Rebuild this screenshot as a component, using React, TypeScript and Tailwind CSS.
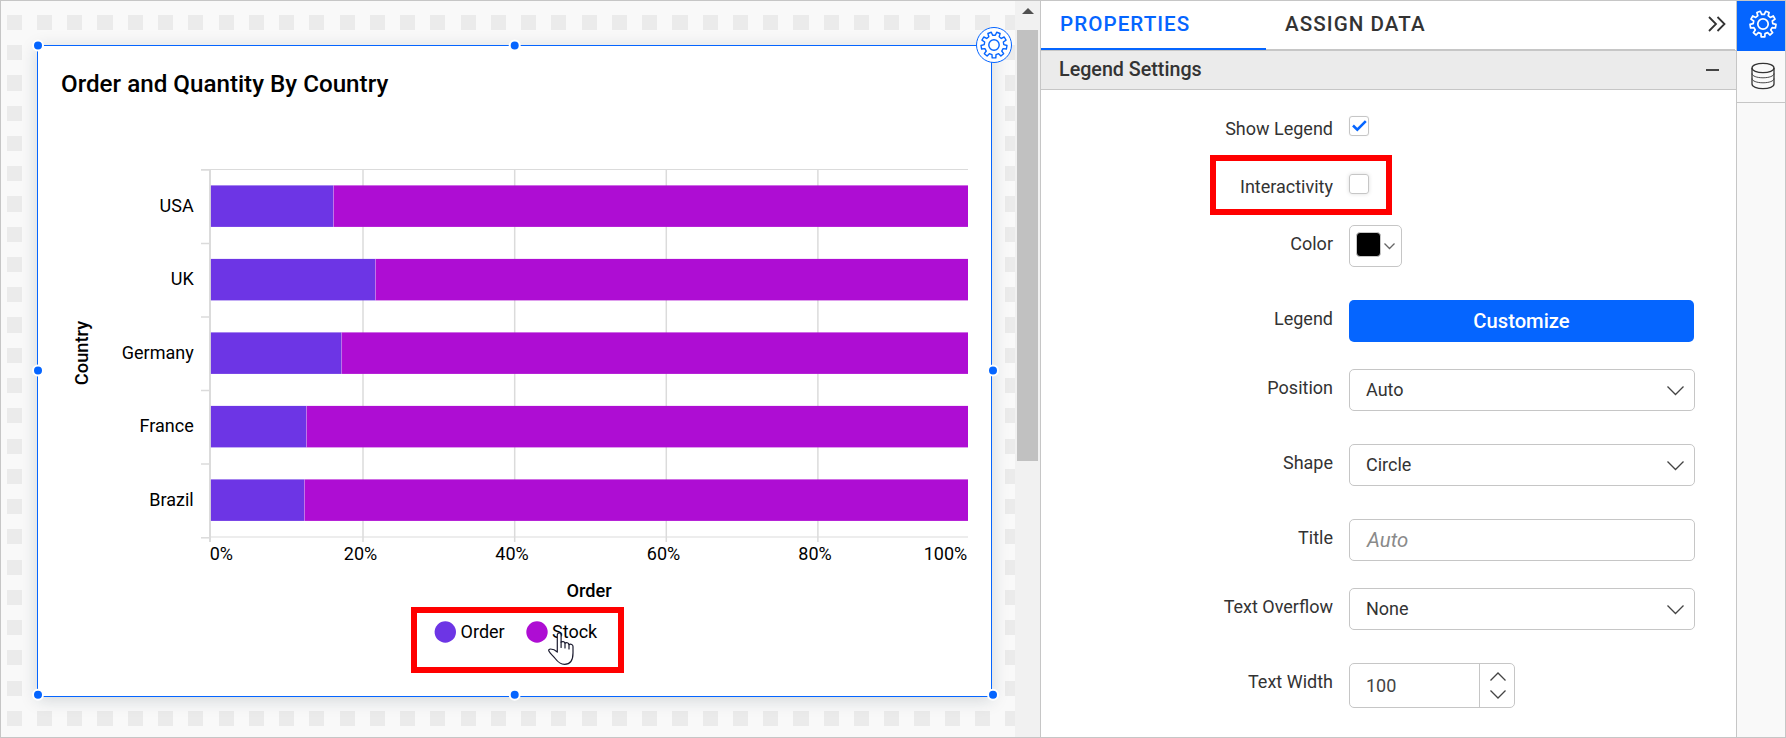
import React from "react";

const ORDER = "#6d35e5";
const STOCK = "#ae0dd3";

const PITCH = 30.26;
const tiles = (() => {
  const list: { x: number; y: number; w: number; h: number }[] = [];
  for (let r = 0; r < 24; r++) {
    for (let c = 0; c < 34; c++) {
      const fx = 7.18 + c * PITCH;
      const fy = 15.38 + r * PITCH;
      const x = Math.floor(fx);
      const y = Math.floor(fy);
      list.push({ x, y, w: Math.floor(fx + 15.13) - x, h: Math.floor(fy + 15.13) - y });
    }
  }
  return list;
})();

const bars = [
  { label: "USA", top: 185.4, split: 333.5 },
  { label: "UK", top: 258.9, split: 375.5 },
  { label: "Germany", top: 332.4, split: 341.6 },
  { label: "France", top: 405.9, split: 306.5 },
  { label: "Brazil", top: 479.4, split: 304.5 },
];

const xTicks = [
  { label: "0%", x: 210, center: 221.3 },
  { label: "20%", x: 363, center: 360.5 },
  { label: "40%", x: 514.7, center: 512 },
  { label: "60%", x: 666.3, center: 663.5 },
  { label: "80%", x: 817.9, center: 815 },
  { label: "100%", x: 0, center: 945.5 },
];

const handles = [
  { x: 38, y: 45.5 },
  { x: 514.7, y: 45.5 },
  { x: 38, y: 370.5 },
  { x: 993, y: 370.5 },
  { x: 38, y: 694.7 },
  { x: 514.7, y: 694.7 },
  { x: 993, y: 694.7 },
];

function gearPath(cx: number, cy: number, outer: number, inner: number) {
  const pts: string[] = [];
  const at = (r: number, deg: number) => {
    const a = ((deg - 90) * Math.PI) / 180;
    return `${(cx + r * Math.cos(a)).toFixed(2)} ${(cy + r * Math.sin(a)).toFixed(2)}`;
  };
  for (let i = 0; i < 9; i++) {
    const d = 20 + i * 40;
    pts.push(at(inner, d - 12), at(outer, d - 8), at(outer, d + 8), at(inner, d + 12));
  }
  return `M${pts.join("L")}Z`;
}

function Gear({ size, stroke }: { size: number; stroke: number }) {
  return (
    <svg width={size} height={size} viewBox="0 0 28 28" fill="none" stroke="currentColor" strokeWidth={stroke} strokeLinejoin="round">
      <path d={gearPath(14, 14, 13, 9.8)} />
      <circle cx="14" cy="14" r="5.2" />
    </svg>
  );
}

function Chevron({ w, up = false, color = "#444" }: { w: number; up?: boolean; color?: string }) {
  return (
    <svg width={w} height={w / 2 + 1} viewBox={`0 0 ${w} ${w / 2 + 1}`} fill="none" stroke={color} strokeWidth="1.3" className={up ? "rotate-180" : ""}>
      <path d={`M0.5 0.5L${w / 2} ${w / 2}L${w - 0.5} 0.5`} />
    </svg>
  );
}

function Chart() {
  return (
    <svg width="953" height="576" viewBox="38 120 953 576" className="block" fontFamily="Roboto, sans-serif" fontSize="18">
      <g stroke="#dbdbdb">
        <line x1="201" x2="968" y1="169.5" y2="169.5" />
        <line x1="210" x2="968" y1="537" y2="537" stroke="#ededed" strokeWidth="2" />
        {[170, 243.5, 317, 390.5, 464, 537.8].map((y) => (
          <line key={y} x1="201" x2="209" y1={y} y2={y} strokeWidth="1.5" />
        ))}
        {xTicks.slice(1, 5).map((t) => (
          <line key={t.label} x1={t.x} x2={t.x} y1="170" y2="542" strokeWidth="1.5" />
        ))}
        <line x1="210" x2="210" y1="169" y2="542" strokeWidth="2" />
      </g>
      {bars.map((b) => (
        <g key={b.label}>
          <rect x="210.9" y={b.top} width={b.split - 210.9} height="41.5" fill={ORDER} />
          <rect x={b.split} y={b.top} width={968 - b.split} height="41.5" fill={STOCK} />
          <line x1={b.split} x2={b.split} y1={b.top} y2={b.top + 41.5} stroke="#fff" strokeOpacity="0.2" />
          <text x="193.7" y={b.top + 26.5} textAnchor="end">
            {b.label}
          </text>
        </g>
      ))}
      {xTicks.map((t) => (
        <text key={t.label} x={t.center} y="560" textAnchor="middle">
          {t.label}
        </text>
      ))}
      <text transform="translate(88 353) rotate(-90)" textAnchor="middle" fontWeight="500" fontSize="18.3">
        Country
      </text>
      <text x="589" y="597" textAnchor="middle" fontWeight="500" fontSize="18.2">
        Order
      </text>
      <circle cx="445.3" cy="632" r="10.7" fill={ORDER} />
      <text x="460.6" y="638">
        Order
      </text>
      <circle cx="537" cy="632" r="10.7" fill={STOCK} />
      <text x="552" y="638">
        Stock
      </text>
    </svg>
  );
}

function Hand() {
  return (
    <svg width="26" height="35" viewBox="0 0 26 35" fill="#fff" stroke="#1a1a2e" strokeWidth="1.2" strokeLinejoin="round" strokeLinecap="round">
      <path d="M9.3 20.5V4.2C9.3 2.8 10.2 2 11.2 2S13.1 2.8 13.1 4.2V11.2C14 10.2 16.6 10.2 17 12.2C18.2 11.2 20.6 11.6 21 13.6C22.8 12.7 25 13.4 25 15.6V22C25 29.5 21.5 33.3 16.6 33.3C12 33.3 9.8 31 7.2 27.5C5 24.6 2.6 23.2 1 20.3C0.2 18.8 1.2 18 2.6 18C5 18 7.2 19 9.3 21Z" />
      <path d="M13.1 11V16.5M17 12.2V17M21 13.6V18" fill="none" />
    </svg>
  );
}

function Canvas() {
  return (
    <div className="relative w-[1015px] shrink-0 overflow-hidden bg-[#f9f9f9]">
      <svg width="1015" height="738" viewBox="1 1 1015 738" className="absolute left-0 top-0" shapeRendering="crispEdges">
        {tiles.map((t) => (
          <rect key={`${t.x}-${t.y}`} x={t.x} y={t.y} width={t.w} height={t.h} fill="#ebebeb" />
        ))}
      </svg>
      <section className="absolute left-[36px] top-[44px] h-[652px] w-[955px] border border-[#0565ff] bg-white shadow-[0_3px_16px_rgba(20,40,60,0.17)]">
        <h1 className="h-[74px] pl-[23px] pt-[22px] text-[24.2px] leading-8 font-medium whitespace-nowrap text-black">Order and Quantity By Country</h1>
        <Chart />
      </section>
      <svg width="1015" height="738" viewBox="1 1 1015 738" className="absolute left-0 top-0">
        {handles.map((h) => (
          <circle key={`${h.x}-${h.y}`} cx={h.x} cy={h.y} r="5" fill="#0565ff" stroke="#fff" strokeWidth="2" />
        ))}
      </svg>
      <div className="absolute left-[975px] top-[26px] flex size-[36px] items-center justify-center rounded-full border border-[#0565ff] bg-white text-[#0565ff]">
        <Gear size={28} stroke={1.4} />
      </div>
      <div className="absolute left-[410px] top-[606px] h-[66px] w-[213px] border-[6px] border-[#ff0000]" />
      <div className="absolute left-[547px] top-[630px]">
        <Hand />
      </div>
    </div>
  );
}

function Scrollbar() {
  return (
    <div className="flex w-[25px] shrink-0 flex-col bg-[#f1f1f1] pl-[2px]">
      <div className="flex h-[29px] w-[21px] justify-center pt-[7px]">
        <svg width="12" height="6" viewBox="0 0 12 6">
          <path d="M6 0L12 6H0Z" fill="#505050" />
        </svg>
      </div>
      <div className="h-[431px] w-[21px] bg-[#c1c1c1]" />
    </div>
  );
}

function Row({ label, gap, tight = false, children }: { label: string; gap: string; tight?: boolean; children: React.ReactNode }) {
  return (
    <div className={`flex items-start ${gap}`}>
      <span className={`w-[292px] shrink-0 text-right text-[18px] leading-6 whitespace-nowrap text-[#333] ${tight ? "-mb-[5px] pt-px" : "pt-[7px]"}`}>{label}</span>
      <div className="ml-[16px] flex">{children}</div>
    </div>
  );
}

const field = "flex h-[42px] w-[346px] items-center rounded-[5px] border border-[#c6c6c6] bg-white pl-[16px] pr-[10px] text-[18px] leading-6 text-[#333]";

function SelectBox({ value }: { value: string }) {
  return (
    <div className={`${field} justify-between`}>
      <span>{value}</span>
      <span className="pt-[2px]">
        <Chevron w={17} />
      </span>
    </div>
  );
}

function Panel() {
  return (
    <div className="flex w-[695px] shrink-0 flex-col bg-white">
      <div className="flex h-[49px] shrink-0">
        <div className="h-[49px] w-[225px] border-b-2 border-[#0565ff] pl-[19px] pt-[9px] text-[20.6px] leading-7 font-medium tracking-[1.05px] text-[#0565ff]">PROPERTIES</div>
        <div className="flex h-[49px] w-[469px] items-start justify-between border-b border-[#c6c6c6] pl-[19px] pr-[9px] pt-[9px]">
          <span className="text-[20.6px] leading-7 font-medium tracking-[1.05px] text-[#333]">ASSIGN DATA</span>
          <svg width="18" height="16" viewBox="0 0 18 16" fill="none" stroke="#333" strokeWidth="1.8" className="mt-[6px]">
            <path d="M1 1L8 8L1 15M9.5 1L16.5 8L9.5 15" />
          </svg>
        </div>
      </div>
      <div className="flex h-[40px] shrink-0 items-center justify-between border-y border-[#c6c6c6] bg-[#ebebeb] pl-[18px] pr-[17px]">
        <h2 className="pb-px text-[19.7px] leading-6 font-medium text-[#333]">Legend Settings</h2>
        <div className="mb-px h-[2px] w-[13px] bg-[#444]" />
      </div>
      <div className="flex flex-col">
        <Row label="Show Legend" gap="mt-[26px]" tight>
          <div className="flex size-[20px] items-center justify-center rounded-[3px] border border-[#c6c6c6] shadow-[0_0_1px_#ddd]">
            <svg width="15" height="12" viewBox="0 0 15 12" fill="none" stroke="#0565ff" strokeWidth="2.6" className="ml-px">
              <path d="M1 5.5L5.3 9.6L13.8 1.2" />
            </svg>
          </div>
        </Row>
        <Row label="Interactivity" gap="mt-[38px]" tight>
          <div className="size-[20px] rounded-[3px] border border-[#c6c6c6] shadow-[0_0_4px_#ddd]" />
        </Row>
        <Row label="Color" gap="mt-[31px]">
          <div className="flex h-[42px] w-[53px] items-center rounded-[5px] border border-[#c6c6c6] pb-[3px] pl-[6px]">
            <div className="size-[25px] rounded-[4px] border border-[#c6c6c6] bg-black" />
            <span className="ml-[3px] pt-[4px]">
              <Chevron w={11} color="#666" />
            </span>
          </div>
        </Row>
        <Row label="Legend" gap="mt-[33px]">
          <button className="h-[42px] w-[345px] rounded-[5px] bg-[#0565ff] text-[20.2px] font-medium text-white">Customize</button>
        </Row>
        <Row label="Position" gap="mt-[27px]">
          <SelectBox value="Auto" />
        </Row>
        <Row label="Shape" gap="mt-[33px]">
          <SelectBox value="Circle" />
        </Row>
        <Row label="Title" gap="mt-[33px]">
          <div className={field}>
            <span className="pl-px text-[20.4px] text-[#8a8a8a] italic">Auto</span>
          </div>
        </Row>
        <Row label="Text Overflow" gap="mt-[27px]">
          <SelectBox value="None" />
        </Row>
        <Row label="Text Width" gap="mt-[33px]">
          <div className="flex h-[45px] w-[166px] rounded-[5px] border border-[#c6c6c6] text-[18px] text-[#444]">
            <div className="flex w-[129px] items-center pl-[16px]">100</div>
            <div className="flex flex-1 flex-col items-center gap-[9px] border-l border-[#c6c6c6] pl-[2px] pt-[8px]">
              <Chevron w={16} up />
              <Chevron w={16} />
            </div>
          </div>
        </Row>
      </div>
    </div>
  );
}

function SideBar() {
  return (
    <div className="flex w-[49px] shrink-0 flex-col border-l border-[#c6c6c6] bg-[#f9f9f9]">
      <div className="flex h-[50px] items-start justify-center bg-[#0565ff] pl-[4px] pt-[9px] text-white">
        <Gear size={28} stroke={1.7} />
      </div>
      <div className="flex h-[52px] items-start justify-center border-b border-[#c6c6c6] pl-[4px] pt-[11px]">
        <svg width="24" height="28" viewBox="0 0 24 28" fill="none" stroke="#333" strokeWidth="1.3">
          <ellipse cx="12" cy="6" rx="11" ry="4.7" />
          <path d="M1 6V22C1 24.6 5.9 26.6 12 26.6S23 24.6 23 22V6" />
          <path d="M1 11.5C1 14 5.9 15.8 12 15.8S23 14 23 11.5M1 16.5C1 19 5.9 20.8 12 20.8S23 19 23 16.5" strokeWidth="0.9" />
        </svg>
      </div>
    </div>
  );
}

export default function App() {
  return (
    <div className="relative flex h-[738px] w-[1786px] overflow-hidden border border-[#c6c6c6] bg-white font-['Roboto',sans-serif]">
      <div className="flex w-[1040px] shrink-0 border-r border-[#c6c6c6]">
        <div className="flex w-[1014px] shrink-0 overflow-hidden">
          <Canvas />
        </div>
        <Scrollbar />
      </div>
      <Panel />
      <SideBar />
      <div className="absolute left-[1209px] top-[154px] h-[60px] w-[182px] border-[6px] border-[#ff0000]" />
    </div>
  );
}
